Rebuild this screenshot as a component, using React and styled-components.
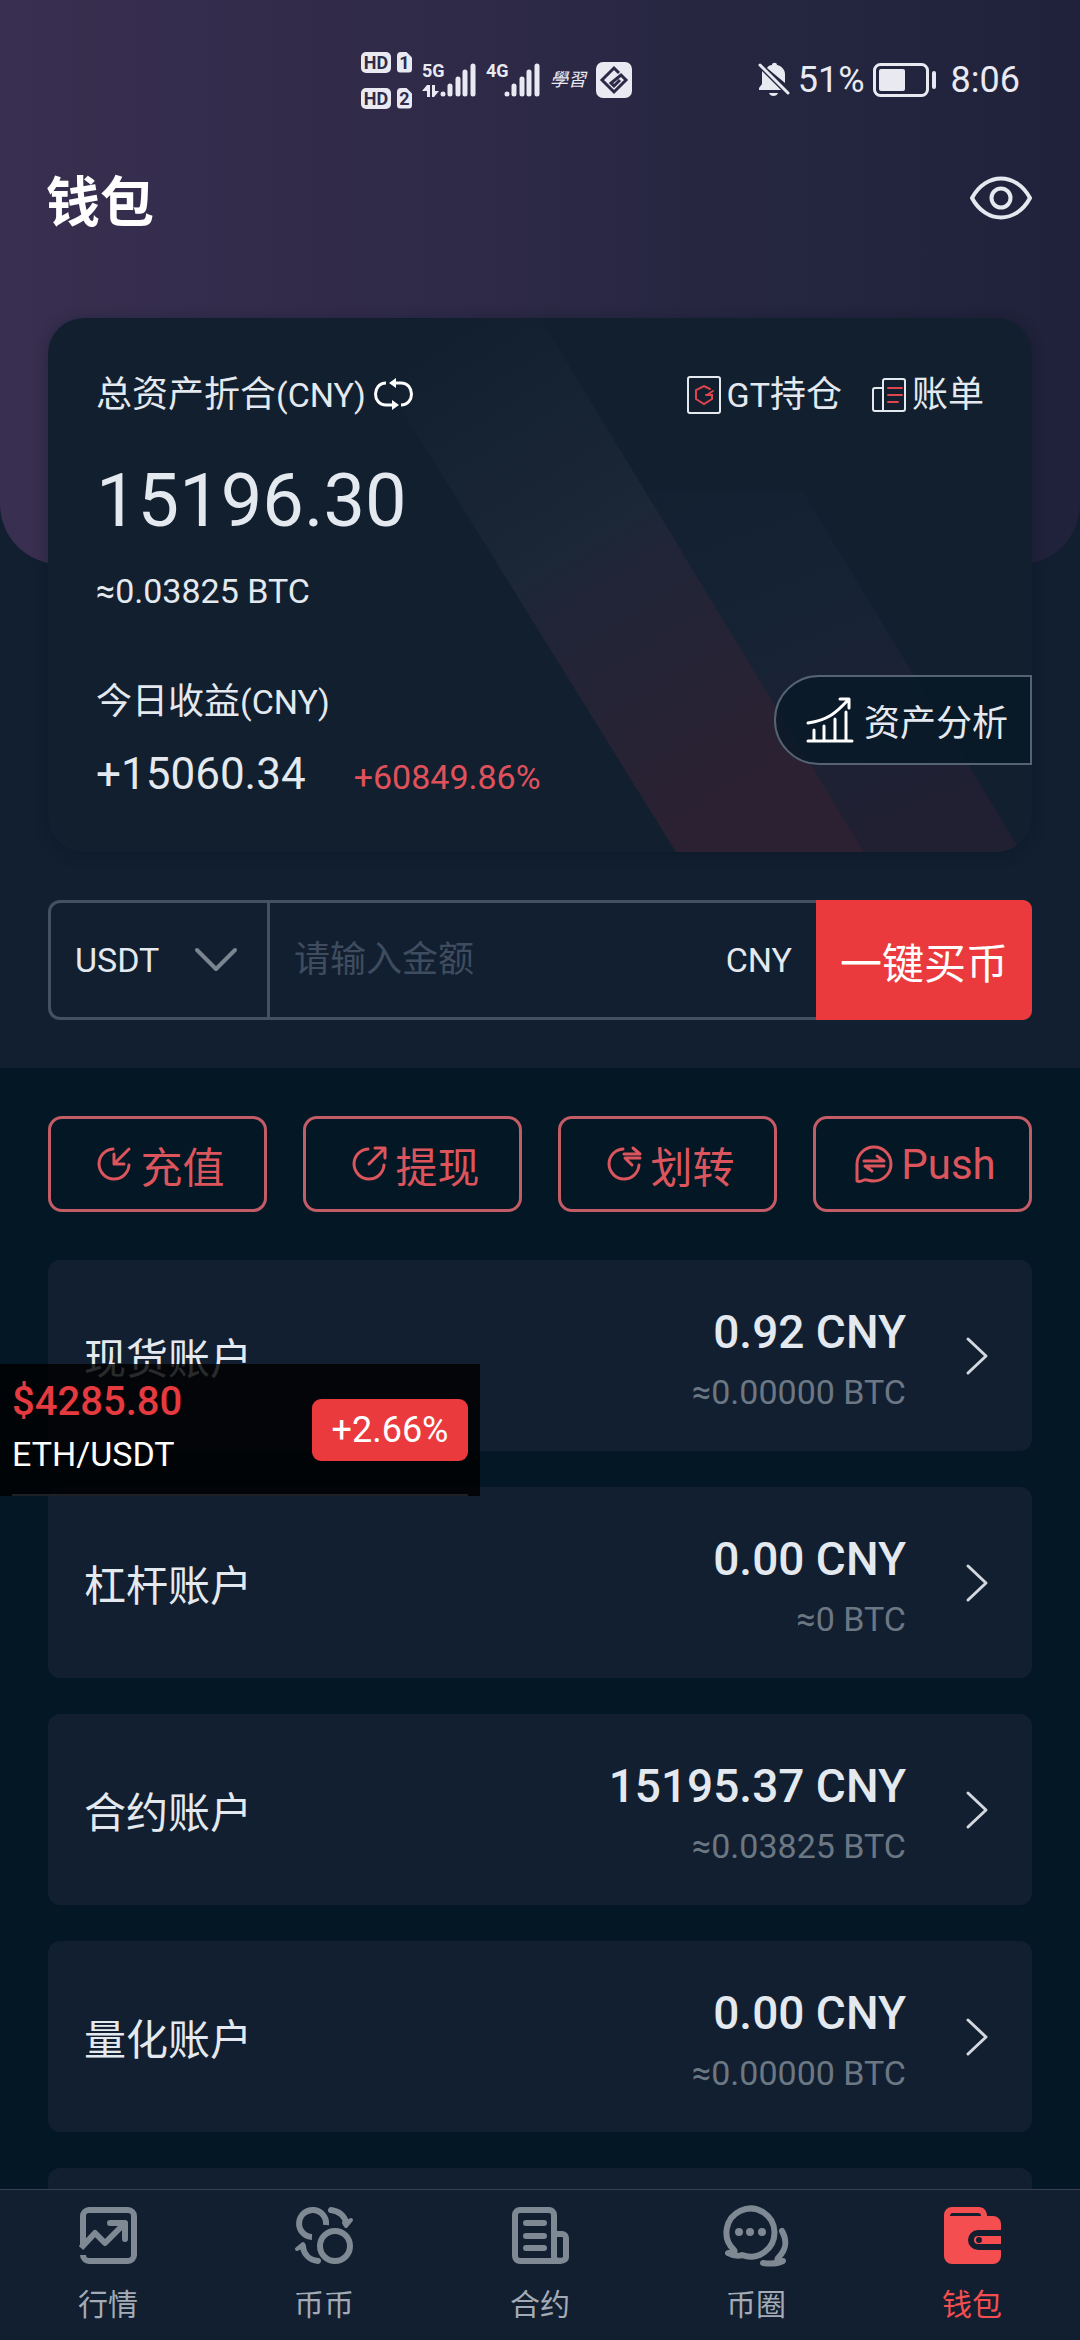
import React from 'react';
import styled, { createGlobalStyle } from 'styled-components';

const GlobalStyle = createGlobalStyle`
  * {
    box-sizing: border-box;
  }
  body {
    margin: 0;
    background-color: #041724;
    color: #e4e9ef;
    font-family: Roboto, 'Noto Sans CJK SC', sans-serif;
    font-size: 36px;
  }
  button, input, select {
    margin: 0;
    padding: 0;
    border: none;
    outline: none;
    background: transparent;
    color: inherit;
    font: inherit;
  }
  h1, h2, p {
    margin: 0;
    font-weight: 400;
  }
  svg {
    display: block;
    flex: none;
  }
`;

const WalletPageLayout = styled.div`
  display: flex;
  flex-direction: column;
  width: 100%;
  height: 100vh;
  position: relative;
`;
const ScrollArea = styled.main`
  flex: 1;
  min-height: 0;
  overflow: hidden auto;
  scrollbar-width: none;
`;
const Num = styled.span`
  font-size: 34px;
`;

/* Top part */
const HeroSection = styled.section`
  position: relative;
  z-index: 0;
  padding-bottom: 48px;
  background-color: #121f30;
  &::before {
    content: '';
    position: absolute;
    z-index: -1;
    top: 0;
    left: 0;
    right: 0;
    height: 564px;
    border-radius: 0 0 60px 60px;
    background: linear-gradient(90deg, #392f50 0%, #2f2a48 40%, #24253f 75%, #20213a 100%);
  }
`;
const StatusBar = styled.div`
  display: flex;
  align-items: center;
  justify-content: space-between;
  height: 160px;
  padding: 0 60px 0 361px;
  color: #e9e9f2;
`;
const StatusGroup = styled.div`
  display: flex;
  align-items: center;
  gap: ${({ $gap }) => $gap}px;
  line-height: 42px;
`;
const SimList = styled.div`
  display: flex;
  flex-direction: column;
  gap: 15px;
`;
const SimRow = styled.div`
  display: flex;
  gap: 6px;
  color: #2e2a48;
  font-weight: 700;
  line-height: 21px;
  text-align: center;
`;
const HdBadge = styled.span`
  width: 30px;
  height: 21px;
  border-radius: 5px;
  background-color: #e9e9f2;
  font-size: 18px;
`;
const SimBadge = styled.span`
  width: 15px;
  height: 21px;
  border-radius: 4px;
  background-color: #e9e9f2;
  clip-path: polygon(0 0, 60% 0, 100% 28%, 100% 100%, 0 100%);
  font-size: 18px;
`;
const Signal = styled.div`
  display: flex;
  height: 34px;
`;
const SignalLabel = styled.div`
  display: flex;
  flex-direction: column;
  justify-content: space-between;
  width: 18px;
  font-size: 18px;
  font-weight: 700;
  line-height: 16px;
`;
const Calligraphy = styled.span`
  font-size: 18px;
  font-style: italic;
`;
const Clock = styled.span`
  margin-left: 6px;
`;
const TitleBar = styled.header`
  display: flex;
  align-items: center;
  justify-content: space-between;
  height: 88px;
  padding: 0 48px 0 46px;
`;
const PageTitle = styled.h1`
  color: #ffffff;
  font-size: 54px;
  font-weight: 700;
  line-height: 80px;
`;
const EyeButton = styled.button`
  height: 52px;
  align-self: flex-start;
  margin-top: 12px;
`;

/* Asset card */
const AssetCard = styled.div`
  position: relative;
  margin: 70px 48px 0;
  padding: 50px 48px 48px;
  border-radius: 36px;
  overflow: hidden;
  background-color: #121f2f;
`;
const CardShadow = styled.div`
  position: absolute;
  z-index: -1;
  top: 318px;
  left: 48px;
  right: 48px;
  height: 534px;
  border-radius: 36px;
  box-shadow: 0 2px 14px rgba(8, 20, 34, 0.4);
`;
const CardStripes = styled.svg`
  position: absolute;
  top: 0;
  right: 0;
`;
const CardBody = styled.div`
  position: relative;
`;
const CardHead = styled.div`
  display: flex;
  align-items: center;
  justify-content: space-between;
  line-height: 54px;
`;
const CardTitle = styled.h2`
  font-size: 36px;
  line-height: 54px;
`;
const IconButton = styled.button`
  display: flex;
  align-items: center;
  gap: 6px;
`;
const HeadGroup = styled.div`
  display: flex;
  align-items: center;
  gap: ${({ $gap }) => $gap}px;
`;
const TotalAmount = styled.p`
  margin-top: 34px;
  font-size: 74px;
  line-height: 90px;
`;
const TotalBtc = styled.p`
  margin-top: 21px;
  font-size: 34px;
  line-height: 48px;
`;
const ProfitBox = styled.div`
  display: flex;
  align-items: flex-start;
  justify-content: space-between;
  height: 129px;
  margin-top: 60px;
`;
const ProfitValue = styled.p`
  display: flex;
  align-items: baseline;
  gap: 48px;
  margin-top: 15px;
  font-size: 44px;
  line-height: 60px;
`;
const ProfitRate = styled(Num)`
  color: #e0525b;
  line-height: 36px;
`;
const AnalysisButton = styled.button`
  display: flex;
  align-items: center;
  gap: 10px;
  height: 90px;
  margin-right: -48px;
  padding: 0 22px 0 30px;
  border: 2px solid #566372;
  border-radius: 45px 0 0 45px;
  background-color: rgba(6, 24, 38, 0.75);
`;

/* Quick buy */
const BuyForm = styled.form`
  display: flex;
  height: 120px;
  margin: 48px 48px 0;
`;
const BuyField = styled.div`
  display: flex;
  flex: 1;
  min-width: 0;
  border: 3px solid #445163;
  border-right: none;
  border-radius: 12px 0 0 12px;
`;
const CoinSelectBox = styled.label`
  display: grid;
  align-items: center;
  width: 219px;
  border-right: 3px solid #445163;
  & > * {
    grid-area: 1 / 1;
  }
  svg {
    justify-self: end;
    margin-right: 30px;
    pointer-events: none;
  }
`;
const CoinSelect = styled.select`
  width: 100%;
  height: 100%;
  padding-left: 24px;
  appearance: none;
  font-size: 34px;
`;
const AmountInput = styled.input`
  flex: 1;
  min-width: 0;
  padding-left: 24px;
  &::placeholder {
    color: #3f4c5f;
    opacity: 1;
  }
`;
const Unit = styled(Num)`
  padding-right: 24px;
  line-height: 114px;
`;
const BuyButton = styled.button`
  width: 216px;
  border-radius: 0 9px 9px 0;
  background-color: #ea3a3d;
  color: #ffffff;
  font-size: 42px;
`;

/* Actions and accounts */
const ActionList = styled.div`
  display: grid;
  grid-template-columns: repeat(4, 1fr);
  gap: 36px;
  padding: 48px 48px 0;
`;
const ActionButton = styled.button`
  display: flex;
  align-items: center;
  justify-content: center;
  gap: 8px;
  height: 96px;
  padding-left: 6px;
  border: 3px solid #c35c66;
  border-radius: 14px;
  color: #dc555d;
  font-size: 42px;
`;
const AccountList = styled.div`
  display: flex;
  flex-direction: column;
  gap: 36px;
  padding: 48px 48px 0;
`;
const AccountRow = styled.button`
  display: flex;
  align-items: center;
  width: 100%;
  height: 191px;
  padding: 0 44px 0 36px;
  border-radius: 12px;
  background-color: #121f30;
`;
const AccountName = styled.span`
  flex: 1;
  text-align: left;
  font-size: 42px;
`;
const AccountValue = styled.span`
  display: flex;
  flex-direction: column;
  margin-right: 60px;
  text-align: right;
  .amount {
    font-size: 46px;
    font-weight: 500;
    line-height: 72px;
  }
  .btc {
    color: #6c7784;
    font-size: 34px;
    line-height: 48px;
  }
`;

/* Floating ticker */
const Ticker = styled.aside`
  position: absolute;
  top: 1364px;
  left: 0;
  display: flex;
  align-items: center;
  justify-content: space-between;
  width: 480px;
  height: 132px;
  padding: 0 12px;
  background-color: rgba(0, 0, 0, 0.82);
  &::after {
    content: '';
    position: absolute;
    bottom: 0;
    left: 12px;
    right: 12px;
    height: 2px;
    background-color: #1e2226;
  }
`;
const TickerText = styled.div`
  margin-bottom: 4px;
  line-height: 52px;
`;
const TickerPrice = styled.p`
  color: #e53a3f;
  font-size: 40px;
  font-weight: 500;
`;
const TickerPair = styled.p`
  color: #ffffff;
  font-size: 34px;
`;
const TickerRate = styled.span`
  width: 156px;
  border-radius: 9px;
  background-color: #ea3a3d;
  color: #ffffff;
  line-height: 62px;
  text-align: center;
`;

/* Bottom tabs */
const TabBar = styled.nav`
  display: grid;
  grid-template-columns: repeat(5, 1fr);
  height: 151px;
  border-top: 1px solid #364252;
  background-color: #121f30;
`;
const TabLink = styled.a`
  display: flex;
  flex-direction: column;
  align-items: center;
  gap: 18px;
  padding-top: 15px;
  color: ${({ $active }) => ($active ? '#f44e50' : '#a3abb6')};
  font-size: 30px;
  line-height: 44px;
  text-decoration: none;
  svg {
    color: ${({ $active }) => ($active ? '#f44e50' : '#7f8993')};
  }
`;

const Line = ({ w, h, sw = 3, children, ...rest }) => (
  <svg
    width={w}
    height={h}
    viewBox={`0 0 ${w} ${h}`}
    fill='none'
    stroke='currentColor'
    strokeWidth={sw}
    strokeLinecap='round'
    strokeLinejoin='round'
    overflow='visible'
    aria-hidden='true'
    {...rest}
  >
    {children}
  </svg>
);

const SignalBars = () => (
  <Line w={36} h={34} sw={5}>
    <path d='M3 31v0M10 23v8M18 16v15M25 9v22M33 3v28' />
  </Line>
);
const DataArrows = () => (
  <svg width='18' height='12' viewBox='0 0 18 12' fill='currentColor' aria-hidden='true'>
    <path d='M5 0h3v12H5V6H0zM10 0h3v6h4l-5 6h-2z' />
  </svg>
);
const GateIcon = () => (
  <svg width='36' height='36' viewBox='0 0 36 36' aria-hidden='true'>
    <rect width='36' height='36' rx='7' fill='#e9e9f2' />
    <path d='M23 11l-5-5L6 18l12 12 12-12-5-5-10 8 3 3 6-6' fill='none' stroke='#2b2946' strokeWidth='3' />
  </svg>
);
const MutedBellIcon = () => (
  <svg width='32' height='36' viewBox='0 0 32 36' fill='currentColor' aria-hidden='true'>
    <path d='M4 9l19 19H1v-2l3-4zM9 6c1-2 3-3 5-3 0-3 5-3 5 0 5 1 8 5 8 9v9zM11 31h9c-1 4-8 4-9 0z' />
    <path d='M2 3l28 28' stroke='currentColor' strokeWidth='3' strokeLinecap='round' />
  </svg>
);
const BatteryIcon = () => (
  <svg width='64' height='34' viewBox='0 0 64 34' aria-hidden='true'>
    <rect x='1.5' y='1.5' width='53' height='31' rx='6' fill='none' stroke='currentColor' strokeWidth='3' />
    <rect x='6' y='6' width='26' height='22' rx='2' fill='currentColor' />
    <rect x='59' y='8' width='4' height='18' rx='2' fill='currentColor' />
  </svg>
);
const EyeIcon = () => (
  <Line w={62} h={44} sw={4}>
    <path d='M2 22C16-4 46-4 60 22 46 48 16 48 2 22z' />
    <circle cx='31' cy='22' r='9.5' />
  </Line>
);
const SwapIcon = () => (
  <Line w={40} h={32} color='#ffffff' strokeLinecap='butt'>
    <path d='M12 4C-2 4-2 26 12 26h7M20 4h7c14 0 14 22 0 22' />
    <path d='M22-1v10l-7-5zM18 21v10l7-5z' fill='currentColor' stroke='none' />
  </Line>
);
const GtIcon = () => (
  <Line w={34} h={38} sw={2}>
    <rect x='1' y='1' width='32' height='36' rx='2' />
    <path d='M23 13l-6-3-8 4v9l8 5 8-5v-4h-6M20 19l6-4' stroke='#e0444c' strokeLinejoin='miter' />
  </Line>
);
const BillIcon = () => (
  <Line w={34} h={36} sw={2}>
    <path d='M11 34V4a2 2 0 0 1 2-2h18a2 2 0 0 1 2 2v28a2 2 0 0 1-2 2H3a2 2 0 0 1-2-2V13a2 2 0 0 1 2-2h8' />
    <path d='M16 11h14M16 18h14M16 25h10' stroke='#e0444c' />
  </Line>
);
const AnalysisIcon = () => (
  <Line w={48} h={48} color='#ffffff'>
    <path d='M2 27C22 24 30 17 42 4M34 3h9v9M2 45h44M8 45V34M18 45V30M29 45V23M40 45V16' />
  </Line>
);
const DownIcon = () => (
  <Line w={42} h={24} sw={4} color='#7b8590'>
    <path d='M2 2l19 19L40 2' />
  </Line>
);
const RightIcon = () => (
  <Line w={22} h={38} color='#d3d8de'>
    <path d='M2 2l18 17L2 36' />
  </Line>
);

const OPEN_RING = 'M17 3a15 15 0 1 0 16 16';
const DepositIcon = () => (
  <Line w={36} h={36}>
    <path d={`${OPEN_RING}M33 3L18 18M18 8v10h10`} />
  </Line>
);
const WithdrawIcon = () => (
  <Line w={36} h={36}>
    <path d={`${OPEN_RING}M18 18L34 2M24 2h10v10`} />
  </Line>
);
const TransferIcon = () => (
  <Line w={36} h={36}>
    <path d={`${OPEN_RING}M18 8h16l-7-6M34 12H19l7 7`} />
  </Line>
);
const PushIcon = () => (
  <Line w={38} h={38}>
    <path d='M2 36V19a17 17 0 1 1 17 17c-5 0-8-2-10-1s-5 2-7 1zM9 16h20l-7-5M29 21H10l7 5' />
  </Line>
);

const MarketIcon = () => (
  <Line w={60} h={60} sw={6} strokeLinecap='butt'>
    <path d='M5 42V11a6 6 0 0 1 6-6h39a6 6 0 0 1 6 6v39a6 6 0 0 1-6 6H11a6 6 0 0 1-6-6' />
    <path d='M3 43l14-15 10 10 19-19' />
    <path d='M32 18h15v16' strokeLinecap='round' />
  </Line>
);
const SpotIcon = () => (
  <Line w={60} h={60} sw={6} strokeLinecap='butt'>
    <path d='M32 20A13.5 13.5 0 1 0 18 32' />
    <circle cx='41' cy='41' r='15' />
    <path d='M37 5c8 1 14 6 15 13M24 56c-8-1-14-6-15-14' strokeLinecap='round' />
    <path d='M50 18l7-3-5 6zM10 41l-7 3 6-5z' strokeWidth='4' fill='currentColor' />
  </Line>
);
const ContractIcon = () => (
  <Line w={60} h={60} sw={6}>
    <path d='M44 56H10a5 5 0 0 1-5-5V10a5 5 0 0 1 5-5h29a5 5 0 0 1 5 5v42c0 5 12 5 12 0V33a4 4 0 0 0-4-4h-6M44 56h7' />
    <path d='M16 18h18M16 31h18M16 43h18' />
  </Line>
);
const CommunityIcon = () => (
  <Line w={68} h={60} sw={6}>
    <path d='M6 48c4 0 8 0 6-3a24 24 0 1 1 8 5c-5 2-10 0-14-2z' />
    <path d='M60 26c6 11 4 19-4 27-2 3 1 3 5 3-6 3-13 3-20 2' />
    <path d='M17 27v0M28 27v0M40 27v0' strokeWidth='8' />
  </Line>
);
const WalletIcon = () => (
  <svg width='60' height='60' viewBox='0 0 60 60' fill='currentColor' aria-hidden='true'>
    <path
      fillRule='evenodd'
      d='M10 2h27c5 0 8 4 8 9h6a8 8 0 0 1 8 8v6H36a10 10 0 0 0 0 20h23v6a8 8 0 0 1-8 8H10a8 8 0 0 1-8-8V10a8 8 0 0 1 8-8zM8 11h31c0-2-1-3-3-3H11c-2 0-3 1-3 3z'
    />
    <path fillRule='evenodd' d='M36 31h23v8H36a4 4 0 0 1 0-8zM37 32a3 3 0 1 0 0 6 3 3 0 0 0 0-6z' />
  </svg>
);

const actions = [
  { text: '充值', Icon: DepositIcon },
  { text: '提现', Icon: WithdrawIcon },
  { text: '划转', Icon: TransferIcon },
  { text: 'Push', Icon: PushIcon },
];
const accounts = [
  { name: '现货账户', amount: '0.92 CNY', btc: '≈0.00000 BTC' },
  { name: '杠杆账户', amount: '0.00 CNY', btc: '≈0 BTC' },
  { name: '合约账户', amount: '15195.37 CNY', btc: '≈0.03825 BTC' },
  { name: '量化账户', amount: '0.00 CNY', btc: '≈0.00000 BTC' },
];
const tabs = [
  { text: '行情', Icon: MarketIcon },
  { text: '币币', Icon: SpotIcon },
  { text: '合约', Icon: ContractIcon },
  { text: '币圈', Icon: CommunityIcon },
  { text: '钱包', Icon: WalletIcon, active: true },
];

const PhoneStatus = () => (
  <StatusBar>
    <StatusGroup $gap={10}>
      <SimList>
        {[1, 2].map((n) => (
          <SimRow key={n}>
            <HdBadge>HD</HdBadge>
            <SimBadge>{n}</SimBadge>
          </SimRow>
        ))}
      </SimList>
      <Signal>
        <SignalLabel>
          5G
          <DataArrows />
        </SignalLabel>
        <SignalBars />
      </Signal>
      <Signal>
        <SignalLabel>4G</SignalLabel>
        <SignalBars />
      </Signal>
      <Calligraphy>學習</Calligraphy>
      <GateIcon />
    </StatusGroup>
    <StatusGroup $gap={8}>
      <MutedBellIcon />
      <span>51%</span>
      <BatteryIcon />
      <Clock>8:06</Clock>
    </StatusGroup>
  </StatusBar>
);

const Stripes = () => (
  <CardStripes width='984' height='534' viewBox='0 0 984 534' aria-hidden='true'>
    <defs>
      <linearGradient id='stripeA' x1='0' y1='0' x2='0.6' y2='1'>
        <stop offset='0.1' stopColor='#1b2737' stopOpacity='0' />
        <stop offset='0.5' stopColor='#1b2737' />
        <stop offset='0.6' stopColor='#212537' />
        <stop offset='1' stopColor='#2b2132' />
      </linearGradient>
      <linearGradient id='stripeB' x1='0' y1='0' x2='0.4' y2='1'>
        <stop offset='0' stopColor='#142333' stopOpacity='0.3' />
        <stop offset='0.5' stopColor='#172335' />
        <stop offset='1' stopColor='#212033' />
      </linearGradient>
    </defs>
    <path d='M297 0h195l324 534H628z' fill='url(#stripeA)' />
    <path d='M597 173h157l219 361H816z' fill='url(#stripeB)' />
  </CardStripes>
);

const App = () => {
  return (
    <WalletPageLayout>
      <GlobalStyle />
      <ScrollArea>
        <HeroSection>
          <PhoneStatus />
          <TitleBar>
            <PageTitle>钱包</PageTitle>
            <EyeButton type='button' aria-label='隐藏资产'>
              <EyeIcon />
            </EyeButton>
          </TitleBar>
          <CardShadow />
          <AssetCard>
            <Stripes />
            <CardBody>
              <CardHead>
                <HeadGroup $gap={8}>
                  <CardTitle>
                    总资产折合<Num>(CNY)</Num>
                  </CardTitle>
                  <IconButton type='button' aria-label='切换币种'>
                    <SwapIcon />
                  </IconButton>
                </HeadGroup>
                <HeadGroup $gap={30}>
                  <IconButton type='button'>
                    <GtIcon />
                    <span><Num>GT</Num>持仓</span>
                  </IconButton>
                  <IconButton type='button'>
                    <BillIcon />
                    账单
                  </IconButton>
                </HeadGroup>
              </CardHead>
              <TotalAmount>15196.30</TotalAmount>
              <TotalBtc>≈0.03825 BTC</TotalBtc>
              <ProfitBox>
                <div>
                  <CardTitle>
                    今日收益<Num>(CNY)</Num>
                  </CardTitle>
                  <ProfitValue>
                    +15060.34
                    <ProfitRate>+60849.86%</ProfitRate>
                  </ProfitValue>
                </div>
                <AnalysisButton type='button'>
                  <AnalysisIcon />
                  资产分析
                </AnalysisButton>
              </ProfitBox>
            </CardBody>
          </AssetCard>
          <BuyForm onSubmit={(e) => e.preventDefault()}>
            <BuyField>
              <CoinSelectBox>
                <CoinSelect aria-label='币种' defaultValue='USDT'>
                  <option>USDT</option>
                </CoinSelect>
                <DownIcon />
              </CoinSelectBox>
              <AmountInput aria-label='金额' placeholder='请输入金额' />
              <Unit>CNY</Unit>
            </BuyField>
            <BuyButton type='submit'>一键买币</BuyButton>
          </BuyForm>
        </HeroSection>
        <ActionList>
          {actions.map(({ text, Icon }) => (
            <ActionButton key={text} type='button'>
              <Icon />
              {text}
            </ActionButton>
          ))}
        </ActionList>
        <AccountList>
          {accounts.map(({ name, amount, btc }) => (
            <AccountRow key={name} type='button'>
              <AccountName>{name}</AccountName>
              <AccountValue>
                <span className='amount'>{amount}</span>
                <span className='btc'>{btc}</span>
              </AccountValue>
              <RightIcon />
            </AccountRow>
          ))}
          <AccountRow as='div' aria-hidden='true' />
        </AccountList>
      </ScrollArea>
      <Ticker>
        <TickerText>
          <TickerPrice>$4285.80</TickerPrice>
          <TickerPair>ETH/USDT</TickerPair>
        </TickerText>
        <TickerRate>+2.66%</TickerRate>
      </Ticker>
      <TabBar>
        {tabs.map(({ text, Icon, active }) => (
          <TabLink key={text} href='#' $active={active}>
            <Icon />
            {text}
          </TabLink>
        ))}
      </TabBar>
    </WalletPageLayout>
  );
};

export default App;
